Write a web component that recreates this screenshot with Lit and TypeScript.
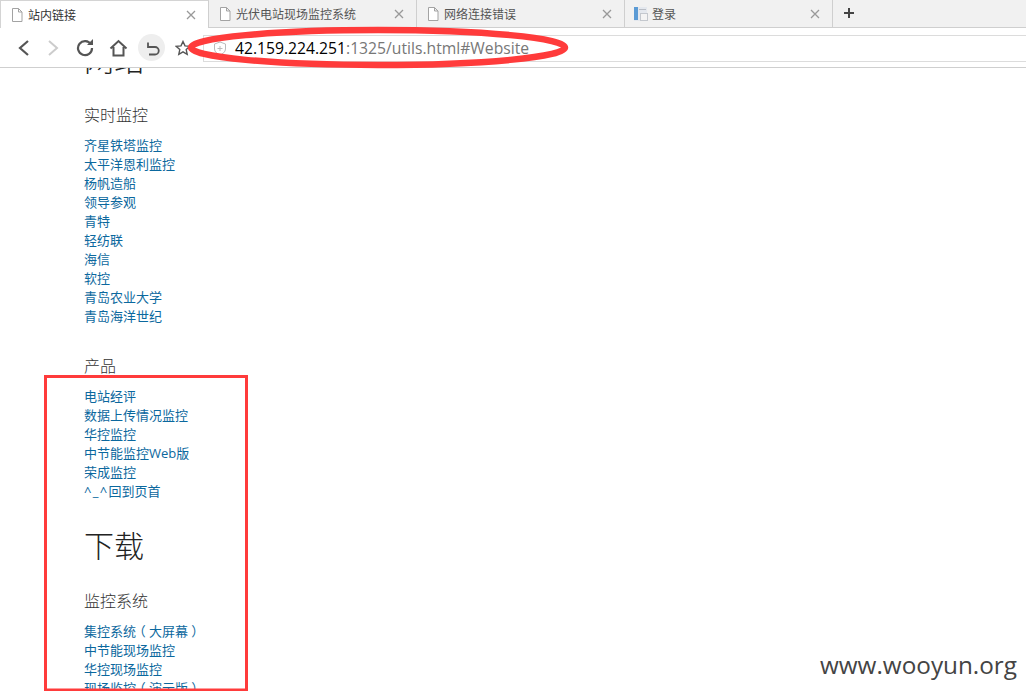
import { LitElement, html, css, svg } from "lit";
import { customElement } from "lit/decorators.js";

const docIcon = svg`<svg class="fav" width="14" height="16" viewBox="0 0 14 16"><path d="M2.5 1.500h6l3.500 3.500v9.500h-9.500z M8.500 1.500v3.500h3.500" fill="#fff" stroke="#a3a3a3" stroke-width="1"/></svg>`;
const loginIcon = svg`<svg class="fav" width="14" height="16" viewBox="0 0 14 16"><rect x="0" y="1" width="13" height="14" fill="#e4e8ee"/><rect x="0" y="1" width="4" height="13" fill="#5b9bd5"/><rect x="5" y="3" width="7" height="1" fill="#b8bcc4"/><rect x="6.500" y="7.500" width="7" height="7" fill="#f4f4f4" stroke="#c4c8ce"/></svg>`;

const tabs = [
  { t: "站内链接", active: true, icon: docIcon },
  { t: "光伏电站现场监控系统", icon: docIcon },
  { t: "网络连接错误", icon: docIcon },
  { t: "登录", icon: loginIcon },
];

@customElement("app-root")
export class AppRoot extends LitElement {
  static styles = css`
    :host { display: block; width: 1026px; height: 691px; position: relative; overflow: hidden; background: #fff; font-family: "Open Sans", "Noto Sans CJK SC", sans-serif; }
    .chrome { height: 68px; display: flex; flex-direction: column; background: #fff; border-bottom: 1px solid #cfcfcf; box-sizing: border-box; position: relative; z-index: 1; }
    .tabs { height: 28px; display: flex; align-items: stretch; background: #f1f1f1; border-bottom: 1px solid #cfcfcf; box-sizing: border-box; padding-left: 1px; }
    .tab { width: 208px; box-sizing: border-box; display: flex; align-items: center; padding: 1px 12px 0 9px; gap: 4px; border-right: 1px solid #cfcfcf; font-size: 12px; color: #555; }
    .tab.active { background: #fff; height: 28px; border-top: 1px solid #d4d4d4; color: #333; box-shadow: -1px 0 0 #d4d4d4; }
    .tab .label { flex: 1; white-space: nowrap; overflow: hidden; }
    .tab .x { width: 10px; height: 10px; flex: none; }
    .plus { width: 32px; display: flex; align-items: center; justify-content: center; padding-bottom: 1px; }
    .bar { flex: 1; display: flex; align-items: center; padding-left: 14px; }
    .btn { height: 30px; display: flex; align-items: center; justify-content: center; flex: none; }
    .back { width: 20px; }
    .fwd { width: 38px; }
    .reload { width: 26px; }
    .home { width: 40px; }
    .undo { width: 27px; height: 27px; border-radius: 50%; background: #eee; }
    .star { width: 36px; padding-right: 1px; box-sizing: border-box; }
    .omni { flex: 1; height: 27px; margin: 1px 0 0 2px; box-sizing: border-box; border: solid #dcdcdc; border-width: 1px 0 1px 1px; display: flex; align-items: center; padding-left: 9px; gap: 8px; font-size: 15.7px; color: #777; white-space: nowrap; }
    .omni b { font-weight: 400; color: #000; }
    .view { height: 623px; overflow: hidden; padding-left: 84px; color: #333; }
    .page { margin-top: -29px; }
    h1 { font-size: 30px; font-weight: 300; line-height: 42px; margin: 0 0 23px; color: #222; }
    h1.dl { margin-bottom: 23px; }
    h3 { font-size: 16px; font-weight: 300; line-height: 22px; margin: 0 0 10px; color: #333; }
    .links { display: flex; flex-direction: column; margin-bottom: 29px; }
    .links.tight { margin-bottom: 24px; }
    a { font-size: 13px; line-height: 19px; color: #0b689e; text-decoration: none; white-space: nowrap; }
    .caret { letter-spacing: 1.3px; }
    .paren { display: inline-block; width: 13px; text-align: center; font-feature-settings: "halt"; }
    .ink { position: absolute; inset: 0; pointer-events: none; z-index: 2; }
    .mark { position: absolute; right: 9px; bottom: 12px; font-size: 24.3px; line-height: 28px; color: #444; z-index: 2; }
  `;

  private links(items: unknown[], tight = false) {
    return html`<div class="links ${tight ? "tight" : ""}">${items.map((i) => html`<a href="#">${i}</a>`)}</div>`;
  }

  render() {
    const L = html`<span class="paren">（</span>`;
    const R = html`<span class="paren">）</span>`;
    return html`
      <div class="chrome">
        <div class="tabs">
          ${tabs.map((t) => html`<div class="tab ${t.active ? "active" : ""}">
            ${t.icon}<span class="label">${t.t}</span>
            <svg class="x" viewBox="0 0 10 10"><path d="M1 1l8 8M9 1l-8 8" stroke="#999" stroke-width="1.3" fill="none"/></svg>
          </div>`)}
          <div class="plus"><svg width="12" height="12" viewBox="0 0 12 12"><path d="M6 1v10M1 6h10" stroke="#444" stroke-width="2" fill="none"/></svg></div>
        </div>
        <div class="bar">
          <div class="btn back"><svg width="14" height="18" viewBox="0 0 14 18"><path d="M11 2L3 9l8 7" stroke="#555" stroke-width="2.2" fill="none"/></svg></div>
          <div class="btn fwd"><svg width="14" height="18" viewBox="0 0 14 18"><path d="M3 2l8 7-8 7" stroke="#ccc" stroke-width="2" fill="none"/></svg></div>
          <div class="btn reload"><svg width="18" height="18" viewBox="0 0 18 18"><path d="M15 5.500A7 7 0 1 0 16 9" stroke="#555" stroke-width="2.2" fill="none"/><path d="M11 6h6V0z" fill="#555"/></svg></div>
          <div class="btn home"><svg width="19" height="18" viewBox="0 0 19 18"><path d="M1.500 9.500L9.500 2l8 7.500M4.500 8v8.500h10V8" stroke="#555" stroke-width="2" fill="none"/></svg></div>
          <div class="btn undo"><svg width="16" height="16" viewBox="0 0 16 16"><path d="M4 2.500v4.500h4.500M4 7h7a3.700 3.700 0 0 1 0 7.500H5" stroke="#555" stroke-width="1.800" fill="none"/></svg></div>
          <div class="btn star"><svg width="16" height="16" viewBox="0 0 16 16"><path d="M8 1.500l2 4.400 4.700.5-3.500 3.200 1 4.700L8 11.900l-4.200 2.400 1-4.700L1.300 6.400 6 5.900z" stroke="#555" stroke-width="1.400" fill="none"/></svg></div>
          <div class="omni">
            <svg width="14" height="15" viewBox="0 0 14 15"><path d="M7 1l5.500 2v5c0 3-3 5-5.500 6-2.500-1-5.500-3-5.500-6V3z" stroke="#bbb" fill="none"/><path d="M7 5v5M4.500 7.500h5" stroke="#bbb" fill="none"/></svg>
            <span><b>42.159.224.251</b>:1325/utils.html#Website</span>
          </div>
        </div>
      </div>
      <div class="view"><div class="page">
        <h1>网站</h1>
        <h3>实时监控</h3>
        ${this.links(["齐星铁塔监控","太平洋恩利监控","杨帆造船","领导参观","青特","轻纺联","海信","软控","青岛农业大学","青岛海洋世纪"])}
        <h3>产品</h3>
        ${this.links(["电站经评","数据上传情况监控","华控监控","中节能监控Web版","荣成监控",html`<span class="caret">^_^</span>回到页首`], true)}
        <h1 class="dl">下载</h1>
        <h3>监控系统</h3>
        ${this.links([html`集控系统${L}大屏幕${R}`,"中节能现场监控","华控现场监控",html`现场监控${L}演示版${R}`])}
      </div></div>
      <svg class="ink" viewBox="0 0 1026 691" width="1026" height="691">
        <ellipse cx="378" cy="47.500" rx="187" ry="17.500" fill="none" stroke="#ff3b3b" stroke-width="6.500"/>
        <rect x="45.500" y="376.500" width="201" height="313.500" fill="none" stroke="#ff3b3b" stroke-width="3"/>
      </svg>
      <div class="mark">www.wooyun.org</div>
    `;
  }
}
